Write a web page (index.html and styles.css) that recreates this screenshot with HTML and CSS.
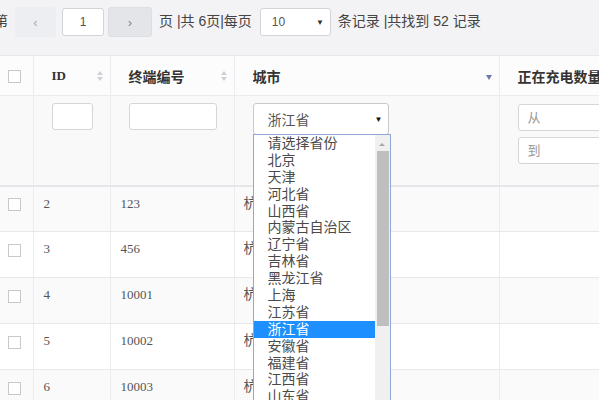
FILE: index.html
```html
<!DOCTYPE html>
<html lang="zh">
<head>
<meta charset="utf-8">
<link rel="stylesheet" href="styles.css">
</head>
<body>
<div class="toolbar">
  <span class="txt lead">第</span>
  <div class="pg prev">‹</div>
  <div class="pg-input">1</div>
  <div class="pg next">›</div>
  <span class="txt t1">页 |共 6页|每页</span>
  <div class="size-sel"><span>10</span><span class="arr">▼</span></div>
  <span class="txt t2">条记录 |共找到 52 记录</span>
</div>
<div class="grid-wrap">
<table class="grid">
  <colgroup>
    <col class="c1"><col class="c2"><col class="c3"><col class="c4"><col class="c5">
  </colgroup>
  <thead>
    <tr class="head">
      <th><span class="cb"></span></th>
      <th><div class="hd"><span class="lat">ID</span><span class="sort"><i class="up"></i><i class="dn"></i></span></div></th>
      <th><div class="hd"><span>终端编号</span><span class="sort"><i class="up"></i><i class="dn"></i></span></div></th>
      <th><div class="hd"><span>城市</span><span class="filt"></span></div></th>
      <th><div class="hd"><span>正在充电数量</span></div></th>
    </tr>
    <tr class="filter">
      <td></td>
      <td><div class="inp w-id"></div></td>
      <td><div class="inp w-no"></div></td>
      <td>
        <div class="sel-wrap">
          <div class="sel"><span>浙江省</span><span class="arr">▼</span></div>
          <div class="list">
            <div class="items">
              <div class="it">请选择省份</div>
              <div class="it">北京</div>
              <div class="it">天津</div>
              <div class="it">河北省</div>
              <div class="it">山西省</div>
              <div class="it">内蒙古自治区</div>
              <div class="it">辽宁省</div>
              <div class="it">吉林省</div>
              <div class="it">黑龙江省</div>
              <div class="it">上海</div>
              <div class="it">江苏省</div>
              <div class="it on">浙江省</div>
              <div class="it">安徽省</div>
              <div class="it">福建省</div>
              <div class="it">江西省</div>
              <div class="it">山东省</div>
            </div>
            <div class="sb">
              <div class="sb-up"></div>
              <div class="sb-thumb"></div>
            </div>
          </div>
        </div>
      </td>
      <td>
        <div class="inp w-rng ph">从</div>
        <div class="inp w-rng ph gap">到</div>
      </td>
    </tr>
  </thead>
  <tbody>
    <tr><td><span class="cb"></span></td><td>2</td><td>123</td><td class="cn">杭州市</td><td></td></tr>
    <tr><td><span class="cb"></span></td><td>3</td><td>456</td><td class="cn">杭州市</td><td></td></tr>
    <tr><td><span class="cb"></span></td><td>4</td><td>10001</td><td class="cn">杭州市</td><td></td></tr>
    <tr><td><span class="cb"></span></td><td>5</td><td>10002</td><td class="cn">杭州市</td><td></td></tr>
    <tr><td><span class="cb"></span></td><td>6</td><td>10003</td><td class="cn">杭州市</td><td></td></tr>
  </tbody>
</table>
</div>
</body>
</html>
```
FILE: styles.css
```css
* { box-sizing: border-box; }
html, body { margin: 0; padding: 0; }
body {
  background: #f3f3f6;
  font-family: "Liberation Sans", "Noto Sans CJK SC", sans-serif;
  color: #444;
  width: 599px;
  height: 400px;
  overflow: hidden;
}
.toolbar {
  height: 55px;
  display: flex;
  align-items: center;
  padding-bottom: 11px;
  font-size: 14px;
}
.txt { line-height: 18px; color: #444; white-space: pre; margin-top: -3px; }
.lead { margin-left: -6px; }
.pg {
  width: 41px; height: 30px;
  border-radius: 3px;
  display: flex; align-items: center; justify-content: center;
  color: #aaa; font-size: 13px;
}
.prev { background: #eceef1; margin-left: 7px; }
.next { background: #e3e5e9; width: 44px; margin-left: 4px; color: #888; border: 1px solid #dcdfe4; }
.pg-input {
  width: 42px; height: 28px; margin-left: 6px;
  background: #fff; border: 1px solid #d4d4d8; border-radius: 3px;
  display: flex; align-items: center; justify-content: center;
  font-size: 12px; color: #555;
}
.t1 { margin-left: 7px; }
.size-sel {
  width: 71px; height: 28px; margin-left: 8px;
  background: #fff; border: 1px solid #d4d4d8; border-radius: 3px;
  display: flex; align-items: center; justify-content: space-between;
  padding: 0 6px 0 11px; font-size: 12px; color: #555;
}
.size-sel .arr { font-size: 8px; color: #333; }
.t2 { margin-left: 7px; }

.grid-wrap { width: 599px; overflow: visible; }
.grid {
  table-layout: fixed;
  border-collapse: collapse;
  width: 699px;
  background: #fff;
  border-top: 1px solid #e6e6eb;
}
.c1 { width: 33px; } .c2 { width: 77px; } .c3 { width: 124px; } .c4 { width: 265px; } .c5 { width: 200px; }
.grid th, .grid td {
  border-left: 1px solid #ececf0;
  border-right: 1px solid #ececf0;
  padding: 0;
}
.grid tr > :first-child { border-left: none; }
.head th {
  height: 40px;
  background: #fcfcfd;
  text-align: left;
  font-weight: bold;
  font-size: 14px;
  color: #333;
  padding: 0 7px 0 18px;
  border-bottom: 1px solid #ececf0;
}
.head th:first-child { padding: 0 0 0 8px; }
.hd { display: flex; align-items: center; justify-content: space-between; }
.lat { font-family: "Liberation Serif", serif; font-size: 13px; }
.sort { display: flex; flex-direction: column; gap: 2px; margin-top: 1px; }
.sort i { display: block; width: 0; height: 0; border-left: 3px solid transparent; border-right: 3px solid transparent; }
.sort .up { border-bottom: 4px solid #d0d0d4; }
.sort .dn { border-top: 4px solid #d0d0d4; }
.filt { width: 0; height: 0; border-left: 3px solid transparent; border-right: 3px solid transparent; border-top: 5px solid #6f78ab; margin-top: 4px; }
.cb {
  display: inline-block; width: 13px; height: 13px;
  border: 1px solid #c8c8cc; background: #fff; vertical-align: middle;
}
.filter td {
  height: 90px;
  background: #f9f9fa;
  vertical-align: top;
  padding: 7px 0 0 18px;
  border-bottom: 2px solid #e6e6ea;
}
.filter td:first-child { padding: 0; }
.inp {
  height: 27px; background: #fff;
  border: 1px solid #d6d6da; border-radius: 3px;
}
.w-id { width: 41px; }
.w-no { width: 88px; }
.w-rng { width: 120px; margin-top: 1px; }
.gap { margin-top: 6px; }
.ph { font-size: 13px; color: #999; padding-left: 9px; line-height: 25px; }
.sel-wrap { position: relative; width: 136px; }
.sel {
  height: 32px; background: #fff;
  border: 1px solid #c9c9ce; border-radius: 3px;
  display: flex; align-items: center; justify-content: space-between;
  padding: 0 5px 0 14px;
  font-size: 14px; color: #555;
}
.sel .arr { font-size: 8px; color: #111; }
.list {
  position: absolute; left: 0; top: 31px;
  width: 138px; height: 280px;
  background: #fff;
  border: 1px solid #8fa8d6;
  display: flex;
  z-index: 5;
}
.items { flex: 1; overflow: hidden; }
.it {
  height: 16.9px; line-height: 16px;
  padding-left: 14px;
  font-size: 14px; color: #4a4a4a;
  white-space: nowrap;
}
.it.on { background: #1e8ffe; color: #fff; }
.sb { width: 15px; background: #f0f0f0; display: flex; flex-direction: column; align-items: center; }
.sb-up { width: 0; height: 0; margin: 8px 0 5px; border-left: 3px solid transparent; border-right: 3px solid transparent; border-bottom: 3px solid #a8a8a8; }
.sb-thumb { width: 12px; margin-left: 1px; height: 175px; background: #bfbfbf; }
.grid tbody td {
  height: 46px;
  vertical-align: top;
  padding: 8px 0 0 10px;
  font-family: "Liberation Serif", "Noto Sans CJK SC", serif;
  font-size: 13px; line-height: 18px;
  color: #555;
  border-bottom: 1px solid #e8e8ec;
}
.grid tbody td:first-child { padding: 8px 0 0 8px; }
.grid tbody td.cn { padding-left: 9px; font-size: 14px; }
.grid tbody tr:nth-child(odd) td { background: #fafafb; }
```
